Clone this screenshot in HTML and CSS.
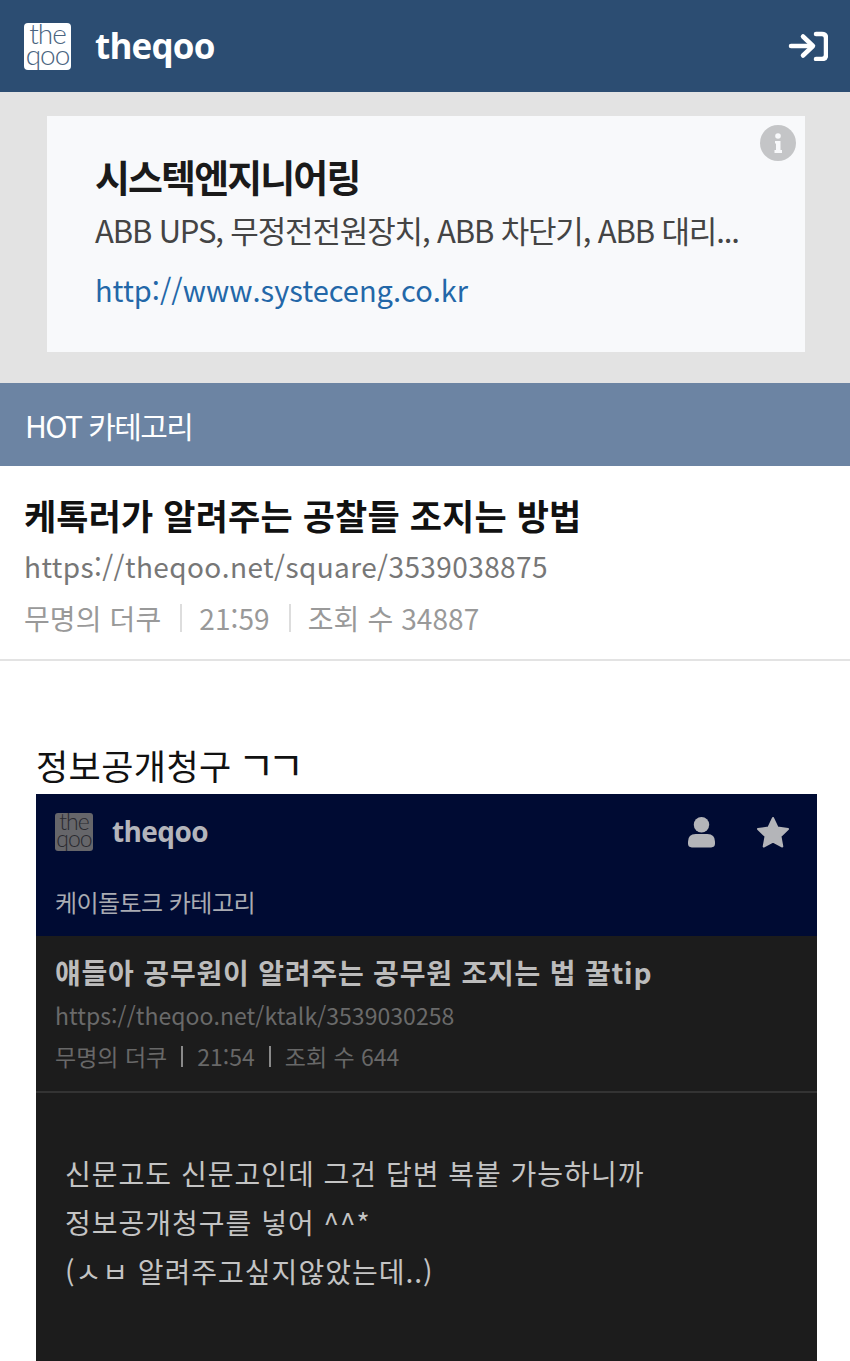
FILE: index.html
```html
<!DOCTYPE html>
<html lang="ko">
<head>
  <meta charset="UTF-8">
  <meta name="viewport" content="width=device-width, initial-scale=1.0">
  <title>theqoo</title>
  <link rel="stylesheet" href="styles.css">
</head>
<body>
  <header class="topbar">
    <div class="logo">the<br>qoo</div>
    <div class="brand">theqoo</div>
    <svg class="login-icon" viewBox="0 0 40 30" fill="none" stroke="#fff" stroke-width="4.5" stroke-linecap="round" stroke-linejoin="round">
      <path d="M3 15H24"/>
      <path d="M15 5.500L25 15L15 24.500"/>
      <path d="M28 3H34Q38 3 38 7V24Q38 28 34 28H28"/>
    </svg>
  </header>

  <section class="ad-wrap">
    <div class="ad">
      <svg class="info-icon" viewBox="0 0 36 36">
        <circle cx="18" cy="18" r="18" fill="#c4c5c7"/>
        <circle cx="18" cy="11" r="2.800" fill="#f8f9fb"/>
        <path d="M15 16H20.500V25H22V28H14.500V25H16V18.500H15Z" fill="#f8f9fb"/>
      </svg>
      <div class="ad-title">시스텍엔지니어링</div>
      <div class="ad-desc">ABB UPS, 무정전전원장치, ABB 차단기, ABB 대리...</div>
      <div class="ad-link">http://www.systeceng.co.kr</div>
    </div>
  </section>

  <div class="category">HOT 카테고리</div>

  <section class="post-head">
    <h1 class="post-title">케톡러가 알려주는 공찰들 조지는 방법</h1>
    <div class="post-url">https://theqoo.net/square/3539038875</div>
    <div class="post-meta">
      <span>무명의 더쿠</span>
      <i class="sep"></i>
      <span>21:59</span>
      <i class="sep"></i>
      <span>조회 수 34887</span>
    </div>
  </section>

  <section class="post-body">
    <p class="caption">정보공개청구 <span class="jamo">ㄱㄱ</span></p>

    <div class="shot">
      <div class="shot-top">
        <div class="shot-logo">the<br>qoo</div>
        <div class="shot-brand">theqoo</div>
        <svg class="shot-user" viewBox="0 0 28 32" fill="#b4b5b9">
          <circle cx="14" cy="8.500" r="8"/>
          <path d="M4 32Q0 32 0 28V26Q0 18 8 18H20Q28 18 28 26V28Q28 32 24 32Z"/>
        </svg>
        <svg class="shot-star" viewBox="0 0 34 32" fill="#b4b5b9" stroke="#b4b5b9" stroke-width="2" stroke-linejoin="round">
          <path d="M17 2L21.500 11.500L32 13L24.500 20.300L26.300 30.500L17 25.500L7.700 30.500L9.500 20.300L2 13L12.500 11.500Z"/>
        </svg>
      </div>
      <div class="shot-cat">케이돌토크 카테고리</div>
      <div class="shot-head">
        <div class="shot-title">얘들아 공무원이 알려주는 공무원 조지는 법 꿀tip</div>
        <div class="shot-url">https://theqoo.net/ktalk/3539030258</div>
        <div class="shot-meta">
          <span>무명의 더쿠</span>
          <i class="shot-sep"></i>
          <span>21:54</span>
          <i class="shot-sep"></i>
          <span>조회 수 644</span>
        </div>
      </div>
      <div class="shot-text">
        <p>신문고도 신문고인데 그건 답변 복붙 가능하니까</p>
        <p>정보공개청구를 넣어 ^^*</p>
        <p>(ㅅㅂ 알려주고싶지않았는데..)</p>
      </div>
    </div>
  </section>
</body>
</html>
```

FILE: styles.css
```css
html, body {
  margin: 0;
  height: 1361px;
  overflow: hidden;
}
body {
  font-family: "Noto Sans CJK KR", "Noto Sans", sans-serif;
  background-color: #fff;
  color: #111;
}
p, h1 {
  margin: 0;
}

.topbar {
  display: flex;
  align-items: center;
  height: 92px;
  padding: 0 22px 0 24px;
  background-color: #2c4d72;
  box-sizing: border-box;
}
.logo {
  width: 47px;
  height: 47px;
  border-radius: 4px;
  background-color: #fff;
  color: #4a6480;
  font-family: "Lato", sans-serif;
  font-weight: 300;
  font-size: 28px;
  line-height: 21px;
  letter-spacing: -1px;
  text-align: center;
}
.brand {
  margin-left: 24px;
  color: #fff;
  font-family: "Open Sans", sans-serif;
  font-weight: 700;
  font-size: 35px;
  letter-spacing: -0.8px;
  line-height: 48px;
}
.login-icon {
  width: 40px;
  height: 30px;
  margin-left: auto;
}

.ad-wrap {
  height: 291px;
  padding: 24px 45px 31px 47px;
  background-color: #e3e3e3;
  box-sizing: border-box;
}
.ad {
  position: relative;
  display: flex;
  flex-direction: column;
  height: 236px;
  padding: 36px 48px 0;
  background-color: #f8f9fb;
  box-sizing: border-box;
}
.info-icon {
  position: absolute;
  top: 9px;
  right: 9px;
  width: 36px;
  height: 36px;
}
.ad-title {
  font-size: 38px;
  font-weight: 700;
  line-height: 48px;
  letter-spacing: -1.9px;
  color: #1a1a1a;
}
.ad-desc {
  margin-top: 9px;
  font-size: 31px;
  line-height: 42px;
  letter-spacing: -1.15px;
  color: #444;
  white-space: nowrap;
}
.ad-link {
  margin-top: 18px;
  font-size: 29px;
  line-height: 40px;
  color: #2367a8;
}

.category {
  height: 83px;
  padding-left: 25px;
  background-color: #6c84a3;
  color: #fff;
  font-size: 30px;
  line-height: 84px;
  letter-spacing: -1.6px;
}

.post-head {
  height: 195px;
  padding: 25px 24px 0;
  border-bottom: 2px solid #e3e3e3;
  box-sizing: border-box;
}
.post-title {
  font-size: 35px;
  font-weight: 700;
  line-height: 48px;
  letter-spacing: 0.15px;
  color: #111;
}
.post-url {
  margin-top: 4px;
  font-size: 28px;
  line-height: 46px;
  color: #777;
  letter-spacing: 0.4px;
}
.post-meta {
  display: flex;
  align-items: center;
  margin-top: 6px;
  font-size: 28px;
  line-height: 46px;
  letter-spacing: 0.1px;
  color: #999;
}
.sep {
  width: 2px;
  height: 28px;
  margin: 0 17px 0 19px;
  background-color: #ddd;
}

.post-body {
  padding: 79px 33px 0 36px;
}
.caption {
  font-size: 35px;
  line-height: 50px;
  color: #111;
  letter-spacing: 0.4px;
}
.jamo {
  margin-left: -4px;
  font-size: 40px;
  line-height: 40px;
  letter-spacing: -7px;
}
.shot {
  height: 570px;
  margin-top: 4px;
  background-color: #1c1c1c;
  color: #c0c0c0;
  overflow: hidden;
}
.shot-top {
  display: flex;
  align-items: center;
  height: 76px;
  padding: 0 27px 0 19px;
  background-color: #000b33;
}
.shot-logo {
  width: 38px;
  height: 38px;
  border-radius: 3px;
  background-color: #66666a;
  color: #2a2a30;
  font-family: "Lato", sans-serif;
  font-weight: 300;
  font-size: 23px;
  line-height: 17px;
  letter-spacing: -1px;
  text-align: center;
}
.shot-brand {
  margin-left: 19px;
  padding-bottom: 2px;
  color: #b4b5bb;
  font-family: "Open Sans", sans-serif;
  font-weight: 700;
  font-size: 28px;
  line-height: 40px;
  letter-spacing: -0.6px;
}
.shot-user {
  width: 27px;
  height: 32px;
  margin-left: auto;
}
.shot-star {
  width: 34px;
  height: 32px;
  margin-left: 41px;
}
.shot-cat {
  height: 66px;
  padding-left: 19px;
  background-color: #000b33;
  color: #a9abb2;
  font-size: 24px;
  line-height: 64px;
  letter-spacing: -0.55px;
}
.shot-head {
  height: 157px;
  padding: 15px 19px 0;
  border-bottom: 2px solid #333;
  box-sizing: border-box;
}
.shot-title {
  font-size: 28px;
  font-weight: 700;
  line-height: 42px;
  letter-spacing: 0.8px;
  color: #bcbcbc;
}
.shot-url {
  margin-top: 3px;
  font-size: 23px;
  line-height: 38px;
  letter-spacing: 0.05px;
  color: #6a6a6a;
}
.shot-meta {
  display: flex;
  align-items: center;
  margin-top: 3px;
  font-size: 23px;
  line-height: 38px;
  color: #686868;
}
.shot-sep {
  width: 2px;
  height: 21px;
  margin: 0 14px;
  background-color: #8a8a8a;
}
.shot-text {
  padding-top: 56px;
  padding-left: 29px;
  font-size: 28px;
  line-height: 49px;
  color: #c4c4c4;
  letter-spacing: 1px;
}
```
